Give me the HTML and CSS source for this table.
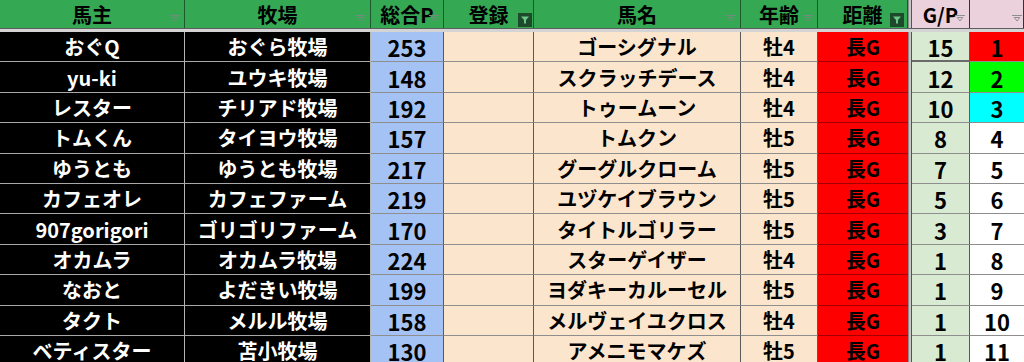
FILE: index.html
```html
<!DOCTYPE html>
<html lang="ja">
<head>
<meta charset="utf-8">
<title>馬主一覧</title>
<link rel="stylesheet" href="styles.css">
</head>
<body>
<div class="sheet">
  <div class="c h">馬主<svg class="fb" viewBox="0 0 10 7"><path d="M0 .5H10M2.2 2.5H7.8L5 6Z"/></svg></div>
  <div class="c h">牧場<svg class="fb" viewBox="0 0 10 7"><path d="M0 .5H10M2.2 2.5H7.8L5 6Z"/></svg></div>
  <div class="c h">総合P<svg class="fb" viewBox="0 0 10 7"><path d="M0 .5H10M2.2 2.5H7.8L5 6Z"/></svg></div>
  <div class="c h">登録<span class="fa"><svg viewBox="0 0 10 10"><path d="M1 1.5H9L6 5V8.5H4V5Z"/></svg></span></div>
  <div class="c h">馬名<svg class="fb" viewBox="0 0 10 7"><path d="M0 .5H10M2.2 2.5H7.8L5 6Z"/></svg></div>
  <div class="c h">年齢<svg class="fb" viewBox="0 0 10 7"><path d="M0 .5H10M2.2 2.5H7.8L5 6Z"/></svg></div>
  <div class="c h">距離<span class="fa fa2"><svg viewBox="0 0 10 10"><path d="M1 1.5H9L6 5V8.5H4V5Z"/></svg></span></div>
  <div class="c gap hg"></div>
  <div class="c h pk">G/P<svg class="fb" viewBox="0 0 10 7"><path d="M0 .5H10M2.2 2.5H7.8L5 6Z"/></svg></div>
  <div class="c h pk"><svg class="fb fb-last" viewBox="0 0 10 7"><path d="M0 .5H10M2.2 2.5H7.8L5 6Z"/></svg></div>
  <div class="sep"></div>

  <div class="c k">おぐQ</div><div class="c k">おぐら牧場</div><div class="c b">253</div><div class="c p"></div><div class="c p">ゴーシグナル</div><div class="c p">牡4</div><div class="c r">長G</div><div class="c gap"></div><div class="c g gtop">15</div><div class="c w rk1">1</div>
  <div class="c k">yu-ki</div><div class="c k">ユウキ牧場</div><div class="c b">148</div><div class="c p"></div><div class="c p">スクラッチデース</div><div class="c p">牡4</div><div class="c r">長G</div><div class="c gap"></div><div class="c g">12</div><div class="c w rk2">2</div>
  <div class="c k">レスター</div><div class="c k">チリアド牧場</div><div class="c b">192</div><div class="c p"></div><div class="c p">トゥームーン</div><div class="c p">牡4</div><div class="c r">長G</div><div class="c gap"></div><div class="c g">10</div><div class="c w rk3">3</div>
  <div class="c k">トムくん</div><div class="c k">タイヨウ牧場</div><div class="c b">157</div><div class="c p"></div><div class="c p">トムクン</div><div class="c p">牡5</div><div class="c r">長G</div><div class="c gap"></div><div class="c g">8</div><div class="c w">4</div>
  <div class="c k">ゆうとも</div><div class="c k">ゆうとも牧場</div><div class="c b">217</div><div class="c p"></div><div class="c p">グーグルクローム</div><div class="c p">牡5</div><div class="c r">長G</div><div class="c gap"></div><div class="c g">7</div><div class="c w">5</div>
  <div class="c k">カフェオレ</div><div class="c k">カフェファーム</div><div class="c b">219</div><div class="c p"></div><div class="c p">ユヅケイブラウン</div><div class="c p">牡5</div><div class="c r">長G</div><div class="c gap"></div><div class="c g">5</div><div class="c w">6</div>
  <div class="c k">907gorigori</div><div class="c k">ゴリゴリファーム</div><div class="c b">170</div><div class="c p"></div><div class="c p">タイトルゴリラー</div><div class="c p">牡5</div><div class="c r">長G</div><div class="c gap"></div><div class="c g">3</div><div class="c w">7</div>
  <div class="c k">オカムラ</div><div class="c k">オカムラ牧場</div><div class="c b">224</div><div class="c p"></div><div class="c p">スターゲイザー</div><div class="c p">牡4</div><div class="c r">長G</div><div class="c gap"></div><div class="c g">1</div><div class="c w">8</div>
  <div class="c k">なおと</div><div class="c k">よだきい牧場</div><div class="c b">199</div><div class="c p"></div><div class="c p">ヨダキーカルーセル</div><div class="c p">牡5</div><div class="c r">長G</div><div class="c gap"></div><div class="c g">1</div><div class="c w">9</div>
  <div class="c k">タクト</div><div class="c k">メルル牧場</div><div class="c b">158</div><div class="c p"></div><div class="c p">メルヴェイユクロス</div><div class="c p">牡4</div><div class="c r">長G</div><div class="c gap"></div><div class="c g">1</div><div class="c w">10</div>
  <div class="c k">ベティスター</div><div class="c k">苫小牧場</div><div class="c b">130</div><div class="c p"></div><div class="c p">アメニモマケズ</div><div class="c p">牡5</div><div class="c r">長G</div><div class="c gap"></div><div class="c g">1</div><div class="c w">11</div>
</div>
</body>
</html>
```
FILE: styles.css
```css
html, body {
  margin: 0;
  padding: 0;
  background: #ffffff;
  overflow: hidden;
}

body {
  font-family: "Noto Sans CJK JP", "Noto Sans", sans-serif;
  font-weight: 700;
  color: #000;
}

.sheet {
  display: grid;
  width: 1024px;
  grid-template-columns: 185px 186px 73px 90px 207px 77px 90px 4px 58px 54px;
  grid-template-rows: 28px 4px;
  grid-auto-rows: 30.4px;
}

.c {
  box-sizing: border-box;
  display: flex;
  align-items: center;
  justify-content: center;
  font-size: 20px;
  line-height: 1;
  white-space: nowrap;
  border-right: 1px solid #5a5a5a;
  border-bottom: 1px solid #8e8e8e;
  padding-top: 1px;
}

/* header */
.h {
  position: relative;
  background: #34a853;
  color: #000;
  border-right: 1px solid #1c5a2e;
  border-bottom: none;
  padding-top: 2px;
}

.h.pk {
  background: #ead1dc;
  border-right-color: #333;
}

.fb {
  position: absolute;
  right: 4px;
  bottom: 6px;
  width: 10px;
  height: 7px;
  fill: none;
  stroke: #6f8d78;
  stroke-width: 1;
}

.pk .fb {
  stroke: #8f8f8f;
}

.fb-last {
  right: 1px;
}

.fa {
  position: absolute;
  right: 1px;
  bottom: 1px;
  width: 14px;
  height: 14px;
  background: #1d4a2b;
  display: flex;
  align-items: center;
  justify-content: center;
}

.fa2 {
  right: 3px;
}

.fa svg {
  width: 10px;
  height: 10px;
  fill: #6cc788;
}

.sep {
  grid-column: 1 / -1;
  background: #d4d4d4;
  border-top: 1px solid #5e5e5e;
  box-sizing: border-box;
}

/* body cells */
.k {
  background: #000;
  color: #fff;
  border-right-color: #b5b5b5;
  border-bottom-color: #a8a8a8;
}

.b {
  background: #a4c2f4;
  font-size: 22px;
}

.p {
  background: #fce5cd;
}

.r {
  background: #ff0000;
  border-right: none;
  border-bottom-color: #a00000;
}

.gap {
  background: #c6c6c6;
  border-left: 1px solid #8a8a8a;
  border-right: 1px solid #555;
  border-bottom: none;
}

.g {
  background: #d9ead3;
  font-size: 22px;
}

.gtop {
  border-bottom: 2px solid #6a6a6a;
}

.w {
  background: #ffffff;
  font-size: 22px;
  border-right: none;
}

.rk1 { background: #ff0000; }
.rk2 { background: #00ff00; }
.rk3 { background: #00ffff; }
```
